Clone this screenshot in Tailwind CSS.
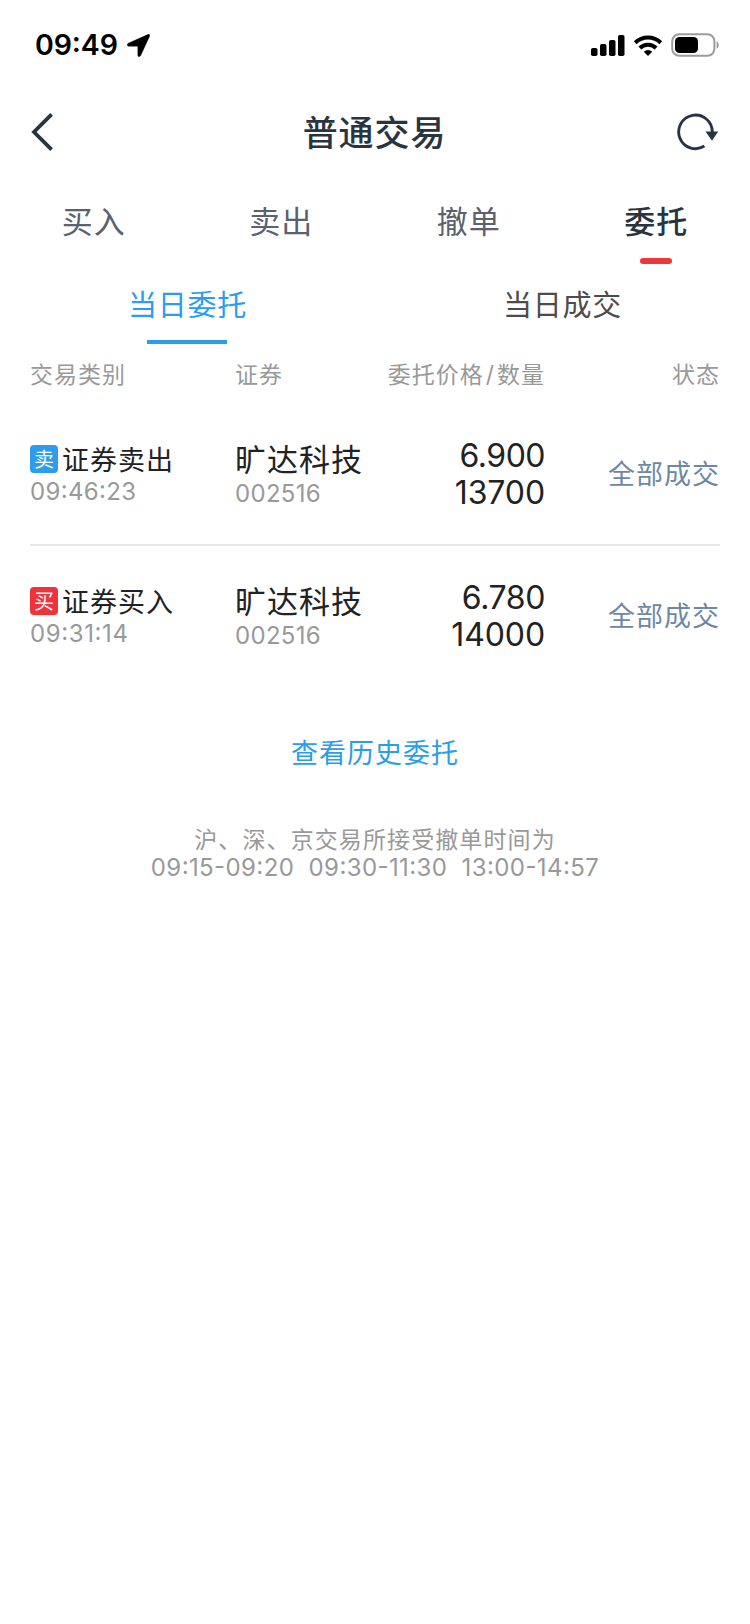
<!DOCTYPE html>
<html lang="zh-CN">
<head>
    <meta charset="UTF-8">
    <meta name="viewport" content="width=device-width, initial-scale=1.0">
    <title>普通交易</title>

    <!-- Tailwind CSS for Styling -->
    <script src="https://cdn.jsdelivr.net/npm/@tailwindcss/browser@4"></script>
</head>
<body class="bg-white font-['Inter','Noto_Sans_CJK_SC',sans-serif]">
    <div class="w-[750px] h-[1624px] overflow-hidden bg-white">

        <!-- Status bar -->
        <div class="flex h-[90px] items-center justify-between pl-[35px] pr-[30px] text-black">
            <div class="flex items-center">
                <span class="text-[28.5px] font-semibold leading-none tracking-[-0.1px] [font-feature-settings:'case']">09:49</span>
                <svg class="ml-[9px] size-[23px]" viewBox="0 0 23 23" fill="currentColor">
                    <path d="M20.8.5 1.3 9.2C-.4 10 .1 12.2 1.7 12.2h8.7c.3 0 .4.1.4.4v8.6c0 1.7 2.1 2 2.9.4L22.6 2.2C23.1 1 22.1-.1 20.8.5Z" stroke="currentColor" stroke-width=".4"/>
                </svg>
            </div>
            <div class="flex items-center">
                <svg class="h-[21px] w-[34px]" viewBox="0 0 34 21" fill="currentColor">
                    <rect x="0" y="13" width="6.5" height="8" rx="1.8"/>
                    <rect x="9" y="9" width="6.5" height="12" rx="1.8"/>
                    <rect x="18" y="5" width="6.5" height="16" rx="1.8"/>
                    <rect x="27" y="0" width="6.5" height="21" rx="1.8"/>
                </svg>
                <svg class="ml-2 h-[21px] w-[30px]" viewBox="0 0 30 21">
                    <g fill="none" stroke="currentColor" stroke-width="4">
                        <path d="M2.2 7.8a18.4 18.4 0 0 1 25.6 0"/>
                        <path d="M6.9 13a11.6 11.6 0 0 1 16.2 0"/>
                    </g>
                    <path d="M15 21 10.8 16.8a6 6 0 0 1 8.4 0Z" fill="currentColor"/>
                </svg>
                <svg class="ml-[8px] h-[24px] w-[49px]" viewBox="0 0 49 24">
                    <rect x="1.2" y="1.2" width="42.2" height="21.6" rx="7" fill="none" stroke="#9c9c9c" stroke-width="2"/>
                    <rect x="4" y="4" width="23" height="16" rx="4.5" fill="#000"/>
                    <path d="M45.6 8.3c2.8 1 2.8 6.4 0 7.4Z" fill="#9c9c9c"/>
                </svg>
            </div>
        </div>

        <!-- Title bar -->
        <div class="flex h-[84px] items-center justify-between pl-[31px] pr-[32px] text-[#283541]">
            <svg class="h-[38px] w-[42px]" viewBox="0 0 42 38" fill="none" stroke="currentColor" stroke-width="3.8">
                <path d="M20.6 1.4 3 19l17.6 17.6"/>
            </svg>
            <h1 class="pt-[3px] text-[35px] font-medium leading-none tracking-[0.9px]">普通交易</h1>
            <svg class="h-[38px] w-[42px]" viewBox="0 0 42 38" fill="none" stroke="currentColor" stroke-width="2.9">
                <path d="M28.4 33.1A16.8 16.8 0 1 1 36.3 19"/>
                <path d="M29.5 18.5h12.6L36 27.8Z" fill="currentColor" stroke="none"/>
            </svg>
        </div>

        <!-- Main tabs -->
        <div class="grid h-[94px] grid-cols-4 text-center text-[31px] leading-[96px] tracking-[1px] text-[#5a6270]">
            <div>买入</div>
            <div>卖出</div>
            <div>撤单</div>
            <div class="relative h-[94px] font-medium text-[#283541]">委托
                <span class="absolute bottom-[4px] left-1/2 h-[6px] w-[32px] -translate-x-1/2 rounded-full bg-[#ee373b]"></span>
            </div>
        </div>

        <!-- Sub tabs -->
        <div class="grid h-[76px] grid-cols-2 text-center text-[29px] leading-[76px] tracking-[0.7px] text-[#4c4c4c]">
            <div class="relative h-[76px] text-[#2d9cea]">当日委托
                <span class="absolute bottom-0 left-[147px] h-[4px] w-[80px] bg-[#2d9cea]"></span>
            </div>
            <div>当日成交</div>
        </div>

        <!-- Table header -->
        <div class="mx-[30px] grid h-[60px] grid-cols-[206px_140px_170px_174px] text-[23px] leading-[62px] tracking-[1px] text-[#999]">
            <div>交易类别</div>
            <div class="-ml-px">证券</div>
            <div class="pr-px text-right">委托价格<span class="mx-[2px]">/</span>数量</div>
            <div class="text-right">状态</div>
        </div>

        <!-- Orders -->
        <div class="mx-[30px] grid h-[142px] grid-cols-[206px_140px_170px_174px] items-center border-b-2 border-[#e8e8e8] text-[#222]">
            <div class="pt-[3px]">
                <div class="flex h-8 items-center">
                    <span class="-mt-[2px] size-7 rounded bg-[#2d9cea] text-center text-[20px] leading-[30px] text-white">卖</span>
                    <span class="ml-[4px] whitespace-nowrap text-[27px] leading-8 tracking-[1px] pt-[2px]">证券卖出</span>
                </div>
                <div class="text-[24px] leading-8 tracking-[0.35px] text-[#999] [font-feature-settings:'case']">09:46:23</div>
            </div>
            <div class="pt-[5px]">
                <div class="-ml-px whitespace-nowrap text-[31px] leading-[34px] tracking-[1px]">旷达科技</div>
                <div class="-ml-px text-[24px] leading-[34px] tracking-[0.3px] text-[#999]">002516</div>
            </div>
            <div class="pr-px text-right text-[32px] leading-[37px]">
                <div class="tracking-[-0.5px]">6.900</div>
                <div class="tracking-[-0.1px]">13700</div>
            </div>
            <div class="pt-[3px] text-right text-[27px] tracking-[1px] text-[#6c88a4]">全部成交</div>
        </div>
        <div class="mx-[30px] grid h-[142px] grid-cols-[206px_140px_170px_174px] items-center border-b-2 border-transparent text-[#222]">
            <div class="pt-[3px]">
                <div class="flex h-8 items-center">
                    <span class="-mt-[2px] size-7 rounded bg-[#ee333b] text-center text-[20px] leading-[30px] text-white">买</span>
                    <span class="ml-[4px] whitespace-nowrap text-[27px] leading-8 tracking-[1px] pt-[2px]">证券买入</span>
                </div>
                <div class="text-[24px] leading-8 tracking-[0.6px] text-[#999] [font-feature-settings:'case']">09:31:14</div>
            </div>
            <div class="pt-[5px]">
                <div class="-ml-px whitespace-nowrap text-[31px] leading-[34px] tracking-[1px]">旷达科技</div>
                <div class="-ml-px text-[24px] leading-[34px] tracking-[0.3px] text-[#999]">002516</div>
            </div>
            <div class="pr-px text-right text-[32px] leading-[37px]">
                <div class="tracking-[-0.4px]">6.780</div>
                <div class="tracking-[-0.1px]">14000</div>
            </div>
            <div class="pt-[3px] text-right text-[27px] tracking-[1px] text-[#6c88a4]">全部成交</div>
        </div>

        <!-- History link -->
        <div class="mt-[46px] text-center text-[27px] leading-[40px] tracking-[1px] text-[#2d9cea]">查看历史委托</div>

        <!-- Cancel time note -->
        <div class="mt-[52px] text-center text-[#999]">
            <p class="text-[23px] leading-[28px] tracking-[1.1px]">沪、深、京交易所接受撤单时间为</p>
            <p class="whitespace-pre text-[24px] leading-[28px] tracking-[0.4px] [font-feature-settings:'case']">09:15-09:20  09:30-11:30  13:00-14:57</p>
        </div>
    </div>
</body>
</html>
